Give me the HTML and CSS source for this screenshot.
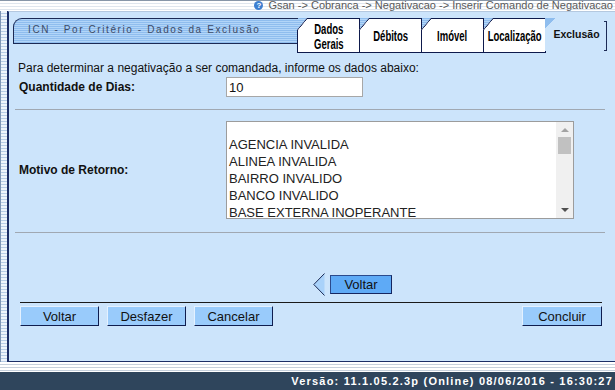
FILE: index.html
```html
<!DOCTYPE html>
<html lang="pt-BR">
<head>
    <meta charset="UTF-8">
    <title>Inserir Comando de Negativação</title>
    <link rel="stylesheet" href="styles.css">
</head>
<body>

  <div class="topo">
    <span class="ajuda">?</span>
    Gsan -&gt; Cobranca -&gt; Negativacao -&gt; Inserir Comando de Negativacao
  </div>

  <div class="principal">
    <div class="lateral"></div>

    <div class="painel">

      <!-- cabeçalho com abas -->
      <div class="cabecalho">
        <div class="titulo">ICN - Por Critério - Dados da Exclusão</div>
        <div class="aba"><span>Dados<br>Gerais</span></div>
        <div class="aba"><span>Débitos</span></div>
        <div class="aba"><span>Imóvel</span></div>
        <div class="aba"><span>Localização</span></div>
        <div class="aba ativa">Exclusão<span class="colchete"></span></div>
      </div>

      <p class="intro">Para determinar a negativação a ser comandada, informe os dados abaixo:</p>

      <div class="linha">
        <label class="rotulo">Quantidade de Dias:</label>
        <input type="text" class="campo" value="10">
      </div>

      <hr class="divisor">

      <div class="linha">
        <label class="rotulo">Motivo de Retorno:</label>
        <div class="lista">
          <div class="itens">
            <div class="item">&nbsp;</div>
            <div class="item">AGENCIA INVALIDA</div>
            <div class="item">ALINEA INVALIDA</div>
            <div class="item">BAIRRO INVALIDO</div>
            <div class="item">BANCO INVALIDO</div>
            <div class="item">BASE EXTERNA INOPERANTE</div>
          </div>
          <div class="rolagem">
            <span class="seta-cima"></span>
            <span class="polegar"></span>
            <span class="seta-baixo"></span>
          </div>
        </div>
      </div>

      <hr class="divisor baixo">

      <div class="navegacao">
        <svg class="seta" width="12" height="23" viewBox="0 0 12 23">
          <polygon points="11.5,0.5 0.8,11.5 11.5,22.5" fill="#a9d2fa"/>
          <polyline points="11.5,0.5 0.8,11.5 11.5,22.5" fill="none" stroke="#1c2a55" stroke-width="1"/>
        </svg>
        <button class="btn-voltar">Voltar</button>
      </div>

      <hr class="divisor-escuro">

      <div class="botoes">
        <button class="botao">Voltar</button>
        <button class="botao">Desfazer</button>
        <button class="botao">Cancelar</button>
        <button class="botao concluir">Concluir</button>
      </div>

    </div>
  </div>

  <div class="faixa"></div>
  <div class="rodape">Versão: 11.1.05.2.3p (Online) 08/06/2016 - 16:30:27</div>

</body>
</html>
```

FILE: styles.css
```css
body {
  margin: 0;
  width: 615px;
  height: 390px;
  overflow: hidden;
  font-family: "Liberation Sans", Arial, sans-serif;
  background: #fff;
}

/* Barra do topo */

.topo {
  height: 10px;
  border-top: 1px solid #8796a8;
  background: repeating-linear-gradient(to bottom, #ffffff 0 2px, #dfe6ee 2px 3px);
  text-align: right;
  font-size: 11px;
  line-height: 8px;
  color: #5a5a5a;
  padding-right: 2px;
  overflow: hidden;
  white-space: nowrap;
}

.ajuda {
  display: inline-block;
  width: 9px;
  height: 9px;
  border-radius: 50%;
  background: #3d7fd1;
  color: #fff;
  font-size: 8px;
  font-weight: bold;
  line-height: 9px;
  text-align: center;
  vertical-align: top;
  margin-right: 2px;
}

.principal {
  display: flex;
  height: 351px;
}

.lateral {
  width: 6px;
  border-left: 1px solid #7f95b4;
  border-right: 1px solid #1c2e66;
  background: repeating-linear-gradient(to bottom, #eef4fb 0 2px, #b8cde6 2px 3px);
}

.painel {
  flex: 1;
  background-color: #cce4fb;
  border-left: 1px solid #1c2e66;
  border-bottom: 1px solid #1c2e66;
  border-top: 1px solid #b4c8df;
  display: flex;
  flex-direction: column;
}

/* Cabeçalho e abas */

.cabecalho {
  display: flex;
  height: 35px;
  margin: 6px 7px 0 4px;
  background: repeating-linear-gradient(to bottom, #8fbdee 0 1px, #b2d5f8 1px 2px) 0 0 / 100% 26px no-repeat;
  border-top-left-radius: 9px;
}

.titulo {
  flex: 1;
  height: 24px;
  border: 1px solid #1c2a55;
  border-right: none;
  border-top-left-radius: 9px;
  padding-left: 14px;
  font-size: 10px;
  letter-spacing: 1.6px;
  line-height: 22px;
  color: #3e4b66;
  white-space: nowrap;
}

.aba {
  width: 61px;
  height: 33px;
  margin-left: -1px;
  border: 1px solid #0e1a4c;
  background: linear-gradient(to bottom right, transparent calc(50% - 1px), #0e1a4c calc(50% - 0.5px), #0e1a4c calc(50% + 0.5px), #fff calc(50% + 1px)) 0 0 / 10px 12px no-repeat border-box, #fff;
  clip-path: polygon(10px 0, 100% 0, 100% 100%, 0 100%, 0 12px);
  display: flex;
  align-items: center;
  justify-content: center;
  text-align: center;
  font-weight: bold;
  font-size: 14px;
  line-height: 15px;
  color: #000;
}

.aba span {
  display: inline-block;
  transform: scaleX(0.68);
  white-space: nowrap;
  padding-top: 2px;
}

.aba:first-of-type {
  margin-left: 0;
}

.ativa {
  width: 63px;
  border: none;
  clip-path: none;
  background: linear-gradient(to bottom right, #8fbdee 50%, transparent 50%) 0 0 / 10px 11px no-repeat, #cce4fb;
  font-size: 10.5px;
  color: #111;
  position: relative;
}

.ativa .colchete {
  position: absolute;
  right: 1px;
  top: 3px;
  width: 2px;
  height: 28px;
  padding: 0;
  border: 1.5px solid #1c2a55;
  border-left: none;
  transform: none;
}

/* Formulário */

.intro {
  margin: 8px 0 2px 9px;
  font-size: 12px;
  line-height: 14px;
  color: #111;
}

.linha {
  display: grid;
  grid-template-columns: 207px auto;
  align-items: center;
  padding-left: 10px;
}

.rotulo {
  font-size: 12px;
  font-weight: bold;
  color: #111;
}

.campo {
  width: 131px;
  height: 18px;
  border: 1px solid #a7a7a7;
  padding: 0 2px;
  font-family: "Liberation Sans", Arial, sans-serif;
  font-size: 13px;
  color: #111;
  margin: 0;
}

.divisor {
  margin: 12px 10px 11px 6px;
  border: none;
  border-top: 1px solid #a0a8b2;
  height: 0;
}

.divisor.baixo {
  margin-top: 13px;
}

.lista {
  width: 346px;
  height: 96px;
  border: 1px solid #9c9c9c;
  background: #fff;
  display: flex;
  overflow: hidden;
}

.itens {
  flex: 1;
  margin-top: -3px;
}

.item {
  font-size: 13px;
  line-height: 17px;
  padding-left: 2px;
  color: #222;
  white-space: nowrap;
}

.rolagem {
  width: 17px;
  background: #f0f0f0;
  display: flex;
  flex-direction: column;
  align-items: center;
}

.seta-cima {
  margin-top: 6px;
  border-left: 4px solid transparent;
  border-right: 4px solid transparent;
  border-bottom: 4px solid #a3a3a3;
}

.polegar {
  margin-top: 5px;
  width: 13px;
  height: 17px;
  background: #c1c1c1;
}

.seta-baixo {
  margin-top: auto;
  margin-bottom: 6px;
  border-left: 4px solid transparent;
  border-right: 4px solid transparent;
  border-top: 4px solid #505050;
}

/* Navegação */

.navegacao {
  display: flex;
  align-items: center;
  margin: 29px 0 0 304px;
  gap: 5px;
}

.seta {
  display: block;
}

.btn-voltar {
  width: 62px;
  height: 19px;
  margin: 0;
  padding: 0;
  background: #5eaaf6;
  border: 1px solid #152660;
  border-top-color: #2b4a8c;
  border-left-color: #2b4a8c;
  font-family: "Liberation Sans", Arial, sans-serif;
  font-size: 13px;
  color: #111;
}

.divisor-escuro {
  margin: 6px 13px 3px 11px;
  border: none;
  border-top: 1px solid #1a1a1a;
  height: 0;
}

.botoes {
  display: flex;
  gap: 8px;
  padding-left: 11px;
  padding-right: 13px;
}

.botao {
  width: 79px;
  height: 20px;
  margin: 0;
  padding: 0;
  background: #99cbfb;
  border: 1px solid #0f1d4f;
  border-top-color: #e4f1ff;
  border-left-color: #e4f1ff;
  font-family: "Liberation Sans", Arial, sans-serif;
  font-size: 13px;
  color: #111;
}

.concluir {
  margin-left: auto;
  width: 80px;
}

/* Rodapé */

.faixa {
  height: 10px;
  background: repeating-linear-gradient(to bottom, #ffffff 0 2px, #c6d0dc 2px 3px);
}

.rodape {
  height: 18px;
  background: #2f455c;
  color: #fff;
  font-size: 11px;
  font-weight: bold;
  letter-spacing: 1.2px;
  line-height: 18px;
  text-align: right;
  padding-right: 2px;
  white-space: nowrap;
}
```
